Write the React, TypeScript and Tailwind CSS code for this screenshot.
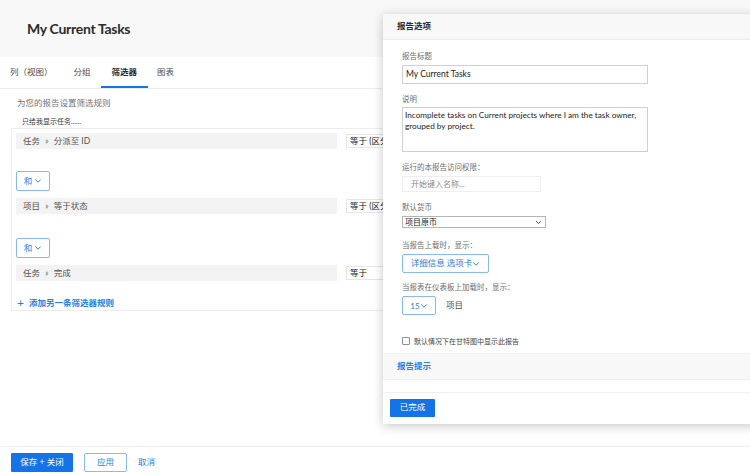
import React from 'react';

const CJK = { fontFamily: 'Lato, "Noto Sans CJK SC", sans-serif' };

const Chevron: React.FC<{ className?: string }> = ({ className }) => (
  <svg className={className} viewBox="0 0 10 10" fill="none" stroke="currentColor" strokeWidth={1.2}>
    <path d="M2 3.5l3 3 3-3" strokeLinecap="round" strokeLinejoin="round" />
  </svg>
);

const FilterRow: React.FC<{ left: string; right: string; op: string }> = ({ left, right, op }) => (
  <div className="flex items-center">
    <div className="w-[321px] h-[16px] bg-[#f3f3f3] flex items-center pl-[7px] text-[8.5px] text-[#555]">
      <span>{left}</span>
      <span className="mx-[5px] text-[#777]">»</span>
      <span>{right}</span>
    </div>
    <div className="ml-[9px] h-[14px] w-[120px] border border-[#e6e6e6] bg-white flex items-center pl-[3px] text-[8.5px] text-[#222] whitespace-nowrap overflow-hidden">
      {op}
    </div>
  </div>
);

const AndButton = () => (
  <div className="w-[34px] h-[20px] border border-[#8ab8f2] rounded-[2px] flex items-center justify-center gap-[2px] text-[8.5px] text-[#2680eb]">
    和
    <Chevron className="w-[8px] h-[8px]" />
  </div>
);

const Label: React.FC<{ children: React.ReactNode; className?: string }> = ({ children, className = '' }) => (
  <div className={`text-[7.5px] leading-[9px] text-[#6e6e6e] ${className}`}>{children}</div>
);

export default function App() {
  return (
    <div className="relative w-[750px] h-[475px] overflow-hidden bg-white flex flex-col" style={CJK}>
      {/* page header */}
      <div className="h-[57px] bg-[#f8f8f8] flex items-center pl-[27px] shrink-0">
        <h1 className="text-[14px] font-bold text-[#2c2c2c] tracking-[-0.3px]">My Current Tasks</h1>
      </div>

      {/* tabs */}
      <div className="h-[32px] border-b border-[#ececec] flex items-stretch text-[8.5px] text-[#4b4b4b] shrink-0">
        <div className="pl-[10px] pr-[21px] flex items-center">列（视图）</div>
        <div className="pr-[10px] flex items-center">分组</div>
        <div className="px-[11px] flex items-center font-bold text-[#2c2c2c] border-b-[2px] border-[#1473e6] pt-[2px]">筛选器</div>
        <div className="px-[9px] flex items-center">图表</div>
      </div>

      {/* filters */}
      <div className="flex-1 px-[11px]">
        <div className="pl-[6px] pt-[8px] text-[8.5px] leading-[12px] text-[#747474]">为您的报告设置筛选规则</div>
        <div className="pl-[11px] pt-[7px] text-[7px] leading-[10px] text-[#333]">只给我显示任务......</div>
        <div className="mt-[2px] border border-[#ececec] px-[4px] pt-[4px] h-[183px]">
          <FilterRow left="任务" right="分派至 ID" op="等于 (区分大小写)" />
          <div className="mt-[22px] mb-[7px]"><AndButton /></div>
          <FilterRow left="项目" right="等于状态" op="等于 (区分大小写)" />
          <div className="mt-[24px] mb-[7px]"><AndButton /></div>
          <FilterRow left="任务" right="完成" op="等于" />
          <div className="mt-[16px] flex items-center text-[8.5px] font-bold text-[#2680eb]">
            <span className="text-[12px] leading-[10px] font-normal mr-[5px] ml-[1px]">+</span>
            添加另一条筛选器规则
          </div>
        </div>
      </div>

      {/* footer */}
      <div className="h-[29px] border-t border-[#ededed] flex items-start pt-[6px] pl-[11px] gap-[11px] text-[8.5px] shrink-0">
        <div className="w-[62px] h-[19px] bg-[#1473e6] text-white flex items-center justify-center rounded-[1px]">保存 + 关闭</div>
        <div className="w-[43px] h-[19px] border border-[#8ab8f2] text-[#2680eb] flex items-center justify-center rounded-[2px]">应用</div>
        <div className="h-[19px] flex items-center text-[#2680eb]">取消</div>
      </div>

      {/* report options panel */}
      <div className="absolute left-[383px] top-[14px] w-[380px] h-[410px] bg-white shadow-[0_2px_10px_rgba(0,0,0,0.22)] flex flex-col">
        <div className="h-[26px] bg-[#f8f8f8] border-b border-[#ececec] flex items-center pl-[14px] text-[8.5px] font-bold text-[#2c2c2c]">
          报告选项
        </div>
        <div className="px-[19px] pt-[12px]">
          <Label>报告标题</Label>
          <div className="mt-[4px] w-[246px] h-[19px] border border-[#cfcfcf] flex items-center pl-[3px] text-[8.5px] text-[#222]">
            My Current Tasks
          </div>
          <Label className="mt-[11px]">说明</Label>
          <div className="mt-[3px] w-[246px] h-[45px] border border-[#cfcfcf] px-[2px] pt-[2px] text-[8.2px] leading-[11px] text-[#222]">
            Incomplete tasks on Current projects where I am the task owner, grouped by project.
          </div>
          <Label className="mt-[11px]">运行的本报告访问权限：</Label>
          <div className="mt-[4px] w-[139px] h-[16px] border border-[#eeeeee] flex items-center pl-[8px] text-[8px] text-[#8a8a8a]">
            开始键入名称...
          </div>
          <Label className="mt-[11px]">默认货币</Label>
          <div className="mt-[4px] w-[144px] h-[12px] border border-[#b5b5b5] flex items-center justify-between pl-[2px] pr-[3px] text-[8px] text-[#222]">
            项目原币
            <Chevron className="w-[7px] h-[7px] text-[#222]" />
          </div>
          <Label className="mt-[13px]">当报告上载时，显示：</Label>
          <div className="mt-[4px] w-[87px] h-[19px] border border-[#8ab8f2] rounded-[2px] flex items-center justify-center text-[8.5px] text-[#2680eb]">
            详细信息 选项卡
            <Chevron className="w-[8px] h-[8px]" />
          </div>
          <Label className="mt-[10px]">当报表在仪表板上加载时，显示：</Label>
          <div className="mt-[4px] flex items-center">
            <div className="w-[34px] h-[19px] border border-[#8ab8f2] rounded-[2px] flex items-center justify-center text-[8px] text-[#2680eb]">
              15
              <Chevron className="w-[8px] h-[8px]" />
            </div>
            <span className="ml-[10px] text-[8.5px] text-[#555]">项目</span>
          </div>
          <div className="mt-[21px] flex items-center gap-[4px]">
            <div className="w-[8px] h-[8px] border border-[#8e8e8e] rounded-[1px]" />
            <span className="text-[7px] text-[#444]">默认情况下在甘特图中显示此报告</span>
          </div>
        </div>
        <div className="mt-[6px] h-[27px] bg-[#f8f8f8] border-y border-[#efefef] flex items-center pl-[14px] text-[8.5px] font-bold text-[#2680eb]">
          报告提示
        </div>
        <div className="h-[13px] border-b border-[#f1f1f1]" />
        <div className="pl-[7px] pt-[6px]">
          <div className="w-[45px] h-[18px] bg-[#1473e6] text-white text-[8.5px] flex items-center justify-center rounded-[1px]">已完成</div>
        </div>
      </div>
    </div>
  );
}
